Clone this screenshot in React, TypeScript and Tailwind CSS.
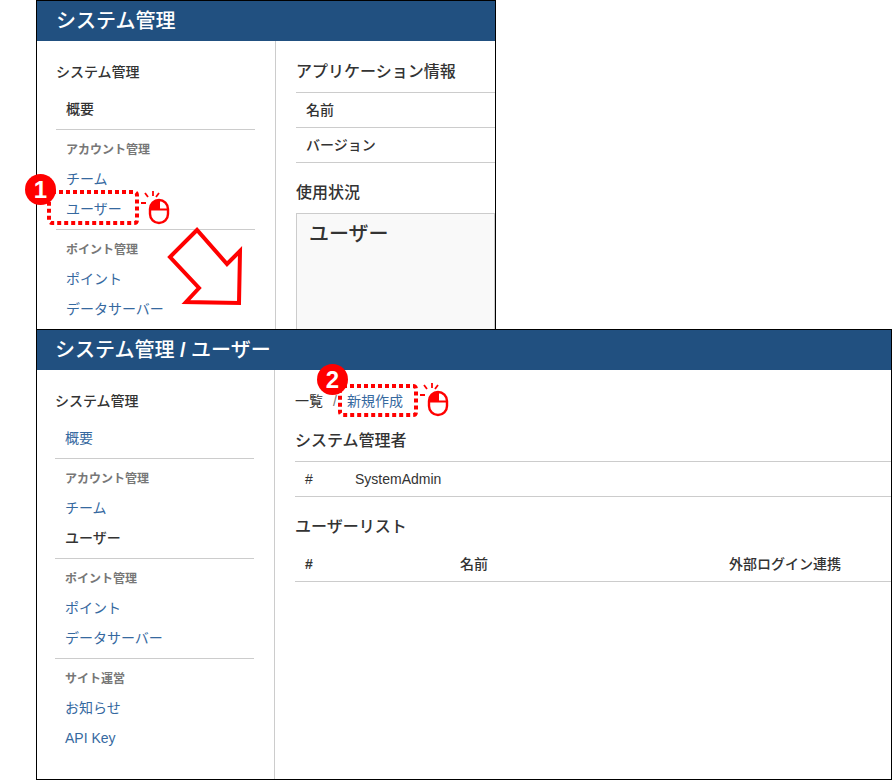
import React from "react";

const font = { fontFamily: '"Liberation Sans", "Noto Sans CJK JP", sans-serif' };

function SideLink({ label, active }: { label: string; active?: boolean }) {
  return (
    <div className={`h-[30px] pl-[10px] leading-[30px] text-sm ${active ? "font-medium text-[#333333]" : "text-[#36699f]"}`}>
      {label}
    </div>
  );
}

function SideGroup({ title, children }: { title: string; children: React.ReactNode }) {
  return (
    <div className="border-t border-[#cccccc] pt-[10px] pb-[5px]">
      <div className="h-[20px] pl-[10px] text-xs leading-[20px] font-bold text-[#777777]">{title}</div>
      <div className="mt-[4px]">{children}</div>
    </div>
  );
}

function Sidebar({ current, className, full }: { current: string; className: string; full?: boolean }) {
  return (
    <div className={`shrink-0 border-r border-[#cccccc] pt-[21px] pr-[20px] ${className}`}>
      <div className="h-[20px] text-sm leading-[20px] font-medium text-[#333333]">システム管理</div>
      <div className="mt-[12px] mb-[5px]">
        <SideLink label="概要" active={current === "概要"} />
      </div>
      <SideGroup title="アカウント管理">
        <SideLink label="チーム" />
        <SideLink label="ユーザー" active={current === "ユーザー"} />
      </SideGroup>
      <SideGroup title="ポイント管理">
        <SideLink label="ポイント" />
        <SideLink label="データサーバー" />
      </SideGroup>
      {full && (
        <SideGroup title="サイト運営">
          <SideLink label="お知らせ" />
          <SideLink label="API Key" />
        </SideGroup>
      )}
    </div>
  );
}

function Header({ children, className }: { children: React.ReactNode; className: string }) {
  return (
    <div className={`flex h-[40px] shrink-0 items-center bg-[#215080] text-xl font-medium whitespace-pre text-white ${className}`}>
      {children}
    </div>
  );
}

function Mouse({ className }: { className: string }) {
  return (
    <svg className={`absolute ${className}`} width="34" height="38" viewBox="0 0 34 38" fill="none" stroke="#ff0000">
      <rect x="13" y="10" width="18" height="23" rx="9" strokeWidth="2.4" />
      <path d="M13 19.5h18M22 10v9.5" strokeWidth="2" />
      <path d="M22 10h-0.5a8.5 8.5 0 0 0-8.5 8.5v1h9z" fill="#ff0000" stroke="none" />
      <path d="M4 13h5M8 3l3 4M16 1v5M22 3l-3 4" strokeWidth="1.8" />
    </svg>
  );
}

function DottedBox({ w, h, className }: { w: number; h: number; className: string }) {
  return (
    <svg className={`absolute ${className}`} width={w} height={h} viewBox={`0 0 ${w} ${h}`} fill="none">
      <rect x="2" y="2" width={w - 4} height={h - 4} rx="3" stroke="#ff0000" strokeWidth="4" strokeDasharray="4 3" />
    </svg>
  );
}

function Badge({ n, className }: { n: string; className: string }) {
  return (
    <div className={`absolute flex h-[31px] w-[31px] items-center justify-center rounded-full bg-[#ff0000] text-2xl font-bold text-white ${className}`}>
      {n}
    </div>
  );
}

export default function App() {
  return (
    <div className="relative h-[780px] w-[892px] overflow-hidden bg-white text-[#333333]" style={font}>
      {/* first capture */}
      <div className="absolute top-0 left-[36px] flex h-[331px] w-[460px] flex-col border border-black bg-white">
        <Header className="pl-[19px]">システム管理</Header>
        <div className="flex min-h-0 flex-1 overflow-hidden">
          <Sidebar current="概要" className="w-[239px] pl-[19px]" />
          <div className="min-w-0 flex-1 pt-[21px] pl-[20px]">
            <div className="h-[20px] text-base leading-[20px] font-medium">アプリケーション情報</div>
            <div className="mt-[10px] border-t border-[#cccccc]">
              <div className="h-[35px] border-b border-[#cccccc] pl-[10px] text-sm leading-[34px] font-medium">名前</div>
              <div className="h-[35px] border-b border-[#cccccc] pl-[10px] text-sm leading-[34px] font-medium">バージョン</div>
            </div>
            <div className="mt-[20px] h-[20px] text-base leading-[20px] font-medium">使用状況</div>
            <div className="mt-[10px] h-[140px] border border-[#cccccc] bg-[#f9f9f9] pt-[6px] pl-[12px] text-xl font-medium">ユーザー</div>
          </div>
        </div>
      </div>

      {/* second capture */}
      <div className="absolute top-[329px] left-[36px] flex h-[451px] w-[856px] flex-col border border-black bg-white">
        <Header className="pl-[18px]">
          システム管理<span className="font-bold"> / </span>ユーザー
        </Header>
        <div className="flex min-h-0 flex-1">
          <Sidebar current="ユーザー" className="w-[238px] pl-[18px]" full />
          <div className="min-w-0 flex-1 pt-[21px] pl-[20px]">
            <div className="flex h-[20px] items-center text-sm leading-[20px]">
              <span>一覧</span>
              <span className="ml-[10px] text-[#777777]">/</span>
              <span className="ml-[10px] text-[#36699f]">新規作成</span>
            </div>
            <div className="mt-[20px] h-[20px] text-base leading-[20px] font-medium">システム管理者</div>
            <div className="mt-[10px] flex h-[36px] items-center border-y border-[#cccccc] pl-[10px] text-sm">
              <span className="w-[50px]">#</span>
              <span>SystemAdmin</span>
            </div>
            <div className="mt-[20px] h-[20px] text-base leading-[20px] font-medium">ユーザーリスト</div>
            <div className="mt-[10px] flex h-[35px] items-center border-b border-[#cccccc] text-sm font-medium">
              <span className="w-[165px] pl-[10px] font-bold">#</span>
              <span className="w-[269px]">名前</span>
              <span>外部ログイン連携</span>
            </div>
          </div>
        </div>
      </div>

      {/* annotations */}
      <DottedBox w={92} h={35} className="top-[190px] left-[47px]" />
      <Badge n="1" className="top-[174px] left-[25px]" />
      <Mouse className="top-[190px] left-[137px]" />
      <svg className="absolute top-[226px] left-[164px]" width="84" height="82" viewBox="0 0 84 82" fill="#ffffff" stroke="#ff0000" strokeWidth="4">
        <path d="M33 4 L6 31 L35 62 L22 76 L75 77 L76 25 L63 38 Z" />
      </svg>

      <DottedBox w={80} h={33} className="top-[384px] left-[338px]" />
      <Badge n="2" className="top-[364px] left-[317px]" />
      <Mouse className="top-[382px] left-[416px]" />
    </div>
  );
}
